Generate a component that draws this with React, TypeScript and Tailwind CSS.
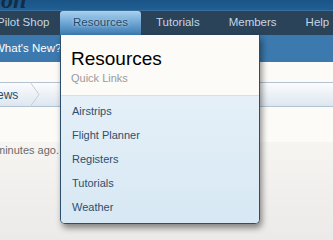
export default function App() {
  const links = ["Airstrips", "Flight Planner", "Registers", "Tutorials", "Weather"];

  return (
    <div
      className="relative w-[333px] h-[240px] overflow-hidden bg-[#fcfbf8]"
      style={{ fontFamily: "'Liberation Sans', Arial, sans-serif" }}
    >
      {/* HEADER */}
      <div className="h-[10px] overflow-hidden bg-gradient-to-b from-[#1b5486] to-[#1e5f94]">
        <div
          className="mt-[-12px] pl-[1px] text-[24px] font-bold italic leading-none text-[#122c45]"
          style={{ fontFamily: "'Liberation Serif', serif" }}
        >
          on
        </div>
      </div>

      {/* NAV TABS */}
      <div className="flex h-[25px] items-end whitespace-nowrap border-t border-[#3b6f9a] bg-[#2a4359] text-[11.5px] text-[#c5d6e4]">
        <div className="flex h-full w-[60px] items-center">
          <span className="ml-[-3px]">Pilot Shop</span>
        </div>
        <div className="flex h-[24px] w-[81px] items-center justify-center rounded-t-[3px] bg-gradient-to-b from-[#a9d1ef] via-[#6ea6d3] to-[#3b7ab0] text-[#24496b] [text-shadow:0_0_3px_#cfe6f8]">
          Resources
        </div>
        <div className="flex h-full items-center gap-[29px] pl-[15px]">
          <span>Tutorials</span>
          <span>Members</span>
          <span>Help</span>
        </div>
      </div>

      {/* SUB NAV */}
      <div className="flex h-[27px] items-center whitespace-nowrap bg-[#3c79ae] text-[11.5px] text-white">
        <span className="ml-[-6px]">What's New?</span>
      </div>

      {/* BREADCRUMB */}
      <div className="mt-[20px] flex h-[25px] items-center border-y border-[#b3c3cf] bg-gradient-to-b from-[#fbfcfe] to-[#dde6ef]">
        <div className="flex h-full items-center text-[12px] text-[#2b4a66]">
          <span className="ml-[-3px]">ews</span>
          <svg width="10" height="25" viewBox="0 0 10 25" className="ml-[12px]">
            <path d="M0 0 L9 12.5 L0 25" fill="none" stroke="#c3d0db" strokeWidth="1" />
          </svg>
        </div>
      </div>

      {/* CONTENT */}
      <div className="h-[99px] border-b border-[#7a7a7a] bg-gradient-to-b from-[#f6f5f2] to-[#ebeae8]">
        <div className="mt-[35px] ml-[-4px] whitespace-nowrap text-[11px] text-[#6b6b6b]">minutes ago.</div>
      </div>

      {/* DROPDOWN */}
      <div className="absolute left-[60px] top-[35px] w-[200px] overflow-hidden rounded-b-[5px] border-x border-b border-[#2c4d6b] shadow-[2px_4px_6px_rgba(0,0,0,0.45)]">
        <div className="h-[61px] border-b border-[#d2e1ec] bg-[#fcfbf8] px-[10px] pt-[12px]">
          <div className="text-[19px] leading-[24px] text-black">Resources</div>
          <div className="mt-[-1px] text-[11px] text-[#9a9a9a]">Quick Links</div>
        </div>
        <div className="flex flex-col bg-gradient-to-b from-[#e5f0f8] to-[#d7e8f4] pb-[4px] pt-[3px]">
          {links.map((l) => (
            <div key={l} className="flex h-[24px] items-center px-[11px] text-[11px] text-[#2d4f6f]">
              {l}
            </div>
          ))}
        </div>
      </div>
    </div>
  );
}
